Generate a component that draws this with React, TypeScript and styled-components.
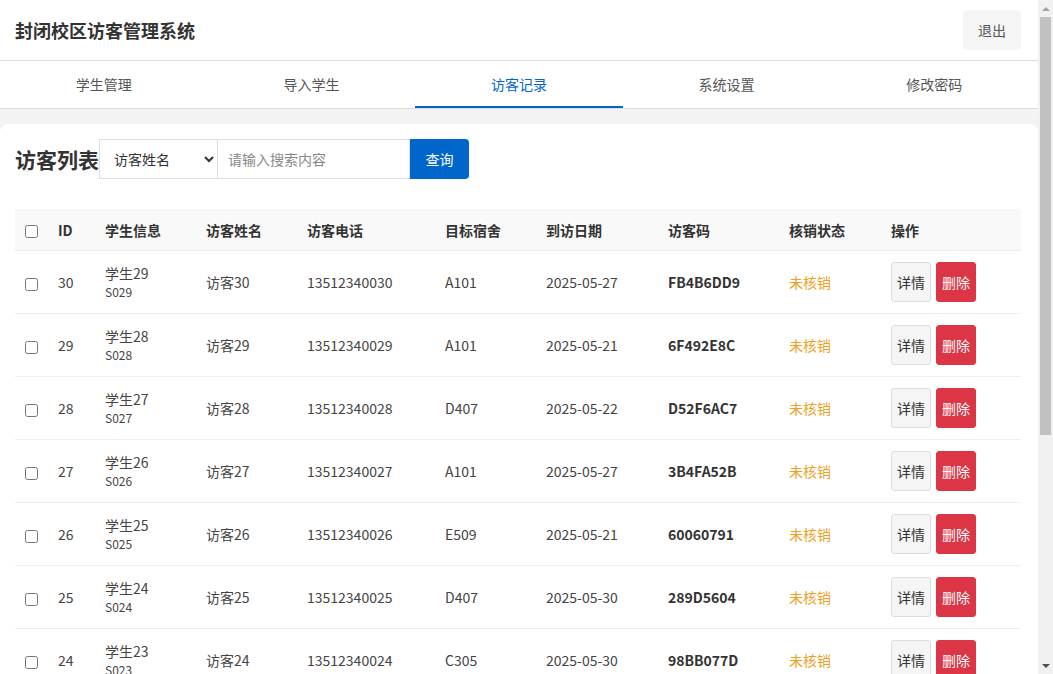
import React from 'react'
import styled, { createGlobalStyle } from 'styled-components'

const GlobalStyle = createGlobalStyle`
  html, body {
    margin: 0;
    height: 100%;
    overflow: hidden;
  }
  body {
    font-family: "Noto Sans CJK SC", "Noto Sans", sans-serif;
    color: #333;
  }
`

const Shell = styled.div`
  display: flex;
  height: 100vh;
`

const Viewport = styled.div`
  flex: 1;
  min-width: 0;
  overflow: hidden;
  background: #f3f3f3;
`

// the page's scroll rail, drawn beside the content
const ScrollRail = styled.aside`
  width: 15px;
  flex: none;
  display: flex;
  flex-direction: column;
  align-items: center;
  background: #f1f1f1;
`

const RailArrow = styled.div<{ $down?: boolean; $dim?: boolean }>`
  height: 17px;
  width: 15px;
  display: flex;
  align-items: center;
  justify-content: center;
  &::before {
    content: '';
    width: 0;
    height: 0;
    border-left: 4px solid transparent;
    border-right: 4px solid transparent;
    ${(p) =>
      p.$down
        ? `border-top: 4px solid ${p.$dim ? '#a3a3a3' : '#505050'};`
        : `border-bottom: 4px solid ${p.$dim ? '#a3a3a3' : '#505050'};`}
  }
`

const RailTrack = styled.div`
  flex: 1;
  width: 100%;
  display: flex;
  justify-content: center;
`

const RailThumb = styled.div`
  width: 11px;
  height: 418px;
  background: #c1c1c1;
`

const Header = styled.header`
  display: flex;
  align-items: center;
  justify-content: space-between;
  height: 60px;
  padding: 0 17px 0 15px;
  background: #fff;
  border-bottom: 1px solid #ddd;
`

const Title = styled.h1`
  margin: 0;
  font-size: 18px;
  font-weight: 700;
  color: #333;
`

const LogoutButton = styled.button`
  width: 58px;
  height: 40px;
  border: none;
  border-radius: 4px;
  background: #f5f5f5;
  color: #555;
  font-family: inherit;
  font-size: 14px;
`

const Nav = styled.nav`
  display: grid;
  grid-template-columns: repeat(5, 1fr);
  background: #fff;
  border-bottom: 1px solid #ddd;
`

const Tab = styled.div<{ $active?: boolean }>`
  height: 45px;
  display: flex;
  align-items: center;
  justify-content: center;
  font-size: 14px;
  color: ${(p) => (p.$active ? '#0066cc' : '#555')};
  border-bottom: 2px solid ${(p) => (p.$active ? '#0066cc' : 'transparent')};
`

const Card = styled.main`
  margin-top: 15px;
  background: #fff;
  border-radius: 8px 8px 0 0;
  padding: 15px 17px 24px 15px;
`

const Toolbar = styled.div`
  display: flex;
  align-items: center;
  margin-bottom: 30px;
`

const ListTitle = styled.h2`
  margin: 0;
  font-size: 21px;
  font-weight: 700;
  color: #333;
`

const Select = styled.select`
  width: 119px;
  height: 40px;
  border: 1px solid #ddd;
  background: #fff;
  padding: 0 8px 0 10px;
  font-family: inherit;
  font-size: 14px;
  color: #333;
`

const SearchInput = styled.input`
  width: 192px;
  height: 40px;
  box-sizing: border-box;
  border: 1px solid #ddd;
  border-left: none;
  padding: 0 10px;
  font-family: inherit;
  font-size: 14px;
  &::placeholder {
    color: #888;
  }
`

const SearchButton = styled.button`
  width: 59px;
  height: 40px;
  border: none;
  border-radius: 0 4px 4px 0;
  background: #0066cc;
  color: #fff;
  font-family: inherit;
  font-size: 14px;
`

const Table = styled.table`
  width: 100%;
  border-collapse: collapse;
  table-layout: fixed;
  font-size: 14px;
`

const Col = styled.col<{ $w: number }>`
  width: ${(p) => p.$w}px;
`

const Th = styled.th`
  background: #f9f9f9;
  text-align: left;
  font-weight: 700;
  color: #333;
  padding: 10px 10px;
  height: 21px;
  border-bottom: 1px solid #eee;
`

const Td = styled.td`
  padding: 11px 10px;
  height: 40px;
  color: #444;
  border-bottom: 1px solid #eee;
`

const Check = styled.input`
  margin: 0;
  width: 13px;
  height: 13px;
  vertical-align: middle;
`

const StudentName = styled.div`
  font-size: 14px;
  line-height: 20px;
`

const StudentNo = styled.div`
  font-size: 12px;
  line-height: 18px;
  color: #444;
`

const Code = styled.span`
  font-weight: 700;
  color: #333;
`

const Status = styled.span`
  color: #f0a020;
`

const Actions = styled.div`
  display: flex;
  gap: 5px;
`

const ActionButton = styled.button<{ $danger?: boolean }>`
  height: 40px;
  padding: 0 5px;
  border-radius: 3px;
  border: 1px solid ${(p) => (p.$danger ? '#dc3545' : '#ddd')};
  background: ${(p) => (p.$danger ? '#dc3545' : '#f5f5f5')};
  color: ${(p) => (p.$danger ? '#fff' : '#333')};
  font-family: inherit;
  font-size: 14px;
`

const rows = [
  [30, '学生29', 'S029', '访客30', '13512340030', 'A101', '2025-05-27', 'FB4B6DD9'],
  [29, '学生28', 'S028', '访客29', '13512340029', 'A101', '2025-05-21', '6F492E8C'],
  [28, '学生27', 'S027', '访客28', '13512340028', 'D407', '2025-05-22', 'D52F6AC7'],
  [27, '学生26', 'S026', '访客27', '13512340027', 'A101', '2025-05-27', '3B4FA52B'],
  [26, '学生25', 'S025', '访客26', '13512340026', 'E509', '2025-05-21', '60060791'],
  [25, '学生24', 'S024', '访客25', '13512340025', 'D407', '2025-05-30', '289D5604'],
  [24, '学生23', 'S023', '访客24', '13512340024', 'C305', '2025-05-30', '98BB077D'],
] as const

const tabs = ['学生管理', '导入学生', '访客记录', '系统设置', '修改密码']

export default function App() {
  return (
    <Shell>
      <GlobalStyle />
      <Viewport>
        <Header>
          <Title>封闭校区访客管理系统</Title>
          <LogoutButton>退出</LogoutButton>
        </Header>
        <Nav>
          {tabs.map((t) => (
            <Tab key={t} $active={t === '访客记录'}>
              {t}
            </Tab>
          ))}
        </Nav>
        <Card>
          <Toolbar>
            <ListTitle>访客列表</ListTitle>
            <Select defaultValue="name">
              <option value="name">访客姓名</option>
              <option value="phone">访客电话</option>
              <option value="code">访客码</option>
            </Select>
            <SearchInput placeholder="请输入搜索内容" />
            <SearchButton>查询</SearchButton>
          </Toolbar>
          <Table>
            <colgroup>
              <Col $w={33} />
              <Col $w={47} />
              <Col $w={101} />
              <Col $w={101} />
              <Col $w={138} />
              <Col $w={101} />
              <Col $w={122} />
              <Col $w={121} />
              <Col $w={102} />
              <Col $w={140} />
            </colgroup>
            <thead>
              <tr>
                <Th>
                  <Check type="checkbox" />
                </Th>
                <Th>ID</Th>
                <Th>学生信息</Th>
                <Th>访客姓名</Th>
                <Th>访客电话</Th>
                <Th>目标宿舍</Th>
                <Th>到访日期</Th>
                <Th>访客码</Th>
                <Th>核销状态</Th>
                <Th>操作</Th>
              </tr>
            </thead>
            <tbody>
              {rows.map(([id, name, no, visitor, phone, dorm, date, code]) => (
                <tr key={id}>
                  <Td>
                    <Check type="checkbox" />
                  </Td>
                  <Td>{id}</Td>
                  <Td>
                    <StudentName>{name}</StudentName>
                    <StudentNo>{no}</StudentNo>
                  </Td>
                  <Td>{visitor}</Td>
                  <Td>{phone}</Td>
                  <Td>{dorm}</Td>
                  <Td>{date}</Td>
                  <Td>
                    <Code>{code}</Code>
                  </Td>
                  <Td>
                    <Status>未核销</Status>
                  </Td>
                  <Td>
                    <Actions>
                      <ActionButton>详情</ActionButton>
                      <ActionButton $danger>删除</ActionButton>
                    </Actions>
                  </Td>
                </tr>
              ))}
            </tbody>
          </Table>
        </Card>
      </Viewport>
      <ScrollRail>
        <RailArrow $dim />
        <RailTrack>
          <RailThumb />
        </RailTrack>
        <RailArrow $down />
      </ScrollRail>
    </Shell>
  )
}
